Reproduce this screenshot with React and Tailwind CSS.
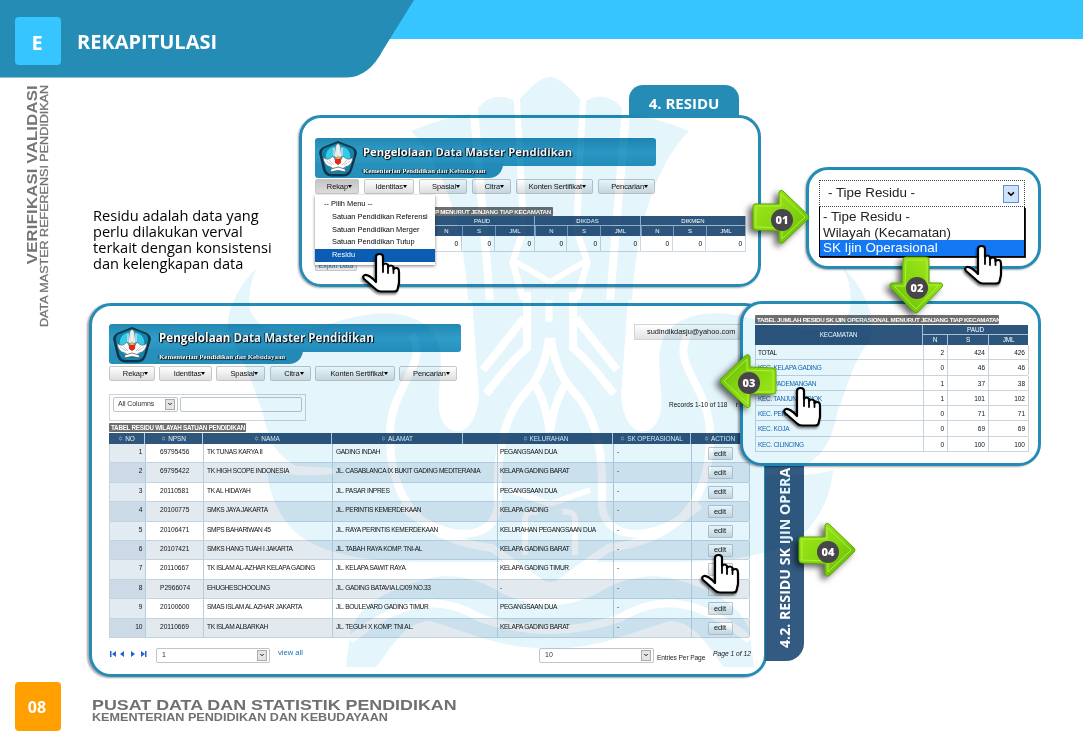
import { ChevronDown, ChevronsUpDown } from "lucide-react";

const schools = [
  ["1", "69795456", "TK TUNAS KARYA II", "GADING INDAH", "PEGANGSAAN DUA"],
  ["2", "69795422", "TK HIGH SCOPE INDONESIA", "JL. CASABLANCA IX BUKIT GADING MEDITERANIA", "KELAPA GADING BARAT"],
  ["3", "20110581", "TK AL HIDAYAH", "JL. PASAR INPRES", "PEGANGSAAN DUA"],
  ["4", "20100775", "SMKS JAYA JAKARTA", "JL. PERINTIS KEMERDEKAAN", "KELAPA GADING"],
  ["5", "20106471", "SMPS BAHARIWAN 45", "JL. RAYA PERINTIS KEMERDEKAAN", "KELURAHAN PEGANGSAAN DUA"],
  ["6", "20107421", "SMKS HANG TUAH I JAKARTA", "JL. TABAH RAYA KOMP. TNI-AL", "KELAPA GADING BARAT"],
  ["7", "20110667", "TK ISLAM AL-AZHAR KELAPA GADING", "JL. KELAPA SAWIT RAYA", "KELAPA GADING TIMUR"],
  ["8", "P2966074", "EHUGHESCHOOLING", "JL. GADING BATAVIA LC/09 NO.33", "-"],
  ["9", "20100600", "SMAS ISLAM AL AZHAR JAKARTA", "JL. BOULEVARD GADING TIMUR", "PEGANGSAAN DUA"],
  ["10", "20110669", "TK ISLAM ALBARKAH", "JL. TEGUH X KOMP. TNI AL.", "KELAPA GADING BARAT"],
];

const districts = [
  ["TOTAL", 2, 424, 426],
  ["KEC. KELAPA GADING", 0, 46, 46],
  ["KEC. PADEMANGAN", 1, 37, 38],
  ["KEC. TANJUNG PRIOK", 1, 101, 102],
  ["KEC. PENJARINGAN", 0, 71, 71],
  ["KEC. KOJA", 0, 69, 69],
  ["KEC. CILINCING", 0, 100, 100],
];

const menuSmall = [
  ["Rekap", "w-[44px] from-[#c4c4c4] to-[#dcdcdc]"],
  ["Identitas", "w-[50px] from-white to-[#dedede]"],
  ["Spasial", "w-[48px] from-white to-[#dedede]"],
  ["Citra", "w-[39px] from-white to-[#dedede]"],
  ["Konten Sertifikat", "w-[77px] from-white to-[#dedede]"],
  ["Pencarian", "w-[57px] from-white to-[#dedede]"],
];

const menuLarge = [
  ["Rekap", "w-[46px] from-white to-[#dedede]"],
  ["Identitas", "w-[53px] from-white to-[#dedede]"],
  ["Spasial", "w-[49px] from-white to-[#dedede]"],
  ["Citra", "w-[41px] from-white to-[#dedede]"],
  ["Konten Sertifikat", "w-[80px] from-white to-[#dedede]"],
  ["Pencarian", "w-[58px] from-white to-[#dedede]"],
];

function Emblem() {
  return (
    <svg viewBox="0 0 40 38" className="h-[38px] w-[40px]">
      <path d="M20 1 L35 7 Q40 10 38.500 15 L34 30 Q32 36 26 36.500 L13 36.500 Q7 36 5 30 L1.500 15 Q0 10 5 7 Z" fill="#10354a" />
      <path d="M20 3 L34 8.500 Q37 11 36 15 L32 29 Q30 34 25 34 L14 34 Q9 34 7.500 29 L4 15 Q3 11 6 8.500 Z" fill="#1285ae" />
      <path d="M8 20 Q6 7 20 6 Q34 7 32 20 L27 29 H13 Z" fill="#35cbe6" />
      <path d="M18 5 L20 3.500 L22 5 L24 17 H16 Z" fill="#eef3f2" stroke="#546" strokeWidth="0.5" />
      <path d="M16 8 V16 M18.500 7 V17 M21.500 7 V17 M24 8 V16" stroke="#dfe8e8" strokeWidth="1.200" />
      <path d="M5 17 Q10 22 15 16 L20 25 L25 16 Q30 22 35 17 Q34 26 27 27 L23 30 H17 L13 27 Q6 26 5 17Z" fill="#fff" stroke="#46525a" strokeWidth="0.600" />
      <path d="M8 21 L14 25 M32 21 L26 25 M11 20 L16 25 M29 20 L24 25" stroke="#87949a" strokeWidth="0.500" />
      <circle cx="20" cy="21" r="3.200" fill="#e3281c" />
      <path d="M20 15 L22 19 H18Z" fill="#f2b233" />
      <path d="M13 29 L20 27 L27 29 L28 32 L20 30.500 L12 32Z" fill="#fff" stroke="#333" strokeWidth="0.600" />
    </svg>
  );
}

function Banner({ wide }) {
  return (
    <div className="relative h-[41px]">
      <div className={`h-[28px] rounded-[3px] bg-linear-to-b from-[#2388b1] via-[#2f9dc7] to-[#2792bd] ${wide ? "w-[352px]" : "w-[341px]"}`} />
      <div className={`-mt-[3px] h-[15px] rounded-bl-[3px] rounded-br-[14px] bg-[#2790ba] ${wide ? "w-[194px]" : "w-[188px]"}`} />
      <div className="absolute top-0 left-[3px] flex">
        <div className="mt-[2px]">
          <Emblem />
        </div>
        <div className={`whitespace-nowrap font-bold text-white ${wide ? "ml-[7px]" : "ml-[5px]"}`}>
          <div className={`mt-[5px] font-['Open_Sans',sans-serif] leading-[17px] [text-shadow:1px_1px_1px_#000,-1px_0_1px_#123] ${wide ? "text-[11.5px] tracking-[0.08px]" : "text-[11.2px] tracking-[0.08px]"}`}>
            Pengelolaan Data Master Pendidikan
          </div>
          <div className={`mt-[6px] font-['Liberation_Serif',serif] leading-[9px] [text-shadow:1px_1px_1px_#000,-1px_0_1px_#012] ${wide ? "text-[6.9px]" : "text-[6.7px]"}`}>
            Kementerian Pendidikan dan Kebudayaan
          </div>
        </div>
      </div>
    </div>
  );
}

function MenuBar({ items, gap }) {
  return (
    <div className={`flex ${gap}`}>
      {items.map(([label, style]) => (
        <button
          key={label}
          className={`flex h-[15px] shrink-0 items-center justify-end whitespace-nowrap rounded-[2px] border border-[#c6c6c6] bg-linear-to-b pr-[6px] text-[7.5px] tracking-[-0.1px] text-[#111] ${style}`}
        >
          {label}
          <span className="border-x-[2px] border-t-[3px] border-x-transparent border-t-black" />
        </button>
      ))}
    </div>
  );
}

function TableLabel({ children, className }) {
  return (
    <div className={`flex h-[9px] items-center whitespace-nowrap rounded-[1px] bg-[#6f6f6f] font-bold text-white ${className}`}>
      {children}
    </div>
  );
}

function Arrow({ label, className, rotate, dot }) {
  return (
    <div className={`absolute z-30 h-[58px] w-[60px] ${className}`}>
      <div className="drop-shadow-[-4px_3px_3px_rgba(0,0,0,0.6)]">
        <svg viewBox="0 0 60 58" className={`h-[58px] w-[60px] overflow-visible ${rotate}`}>
          <defs>
            <linearGradient id={`leaf${label}`} x1="0" y1="0" x2="1" y2="1">
              <stop offset="0" stopColor="#a4ea18" />
              <stop offset="0.500" stopColor="#86d810" />
              <stop offset="1" stopColor="#62b505" />
            </linearGradient>
          </defs>
          <path
            d="M4 16 H28 V4 Q29 1 32 3 L57 27 Q59 29 57 31 L33 54 Q29 57 28 53 V43 L5 42 Q2 42 2 39 V19 Q2 16 4 16Z"
            fill={`url(#leaf${label})`}
            stroke="#58a808"
          />
          <path d="M5 18 H30 V6 L54 29 L31 51 V40 L5 39Z" fill="none" stroke="#b4ee3e" strokeWidth="1" />
        </svg>
      </div>
      <span className={`absolute flex size-[22px] items-center justify-center rounded-full bg-[#48454b] font-['Open_Sans',sans-serif] text-[11px] font-extrabold text-white ${dot}`}>
        {label}
      </span>
    </div>
  );
}

function Hand({ className }) {
  return (
    <svg viewBox="0 0 40 42" className={`absolute z-30 h-[42px] w-[40px] overflow-visible drop-shadow-[-1px_2px_1px_rgba(0,0,0,0.5)] ${className}`}>
      <path
        d="M15 30 V5 Q15 2 18.500 2 Q22 2 22 5 V13 Q24.500 10 27 13 V15 Q30 12 32.500 15 V17 Q38 14 38 20 V31 L36.500 37.500 Q36 39.500 33 39.500 H20 Q17 39.500 15 37.500 L3 27 Q1 24 4 23 Q8 22.500 15 30Z"
        fill="#fff"
        stroke="#000"
        strokeWidth="2.200"
        strokeLinejoin="round"
      />
      <path d="M22 12V20 M27 14V21 M32.500 16V21" stroke="#000" strokeWidth="1.800" strokeLinecap="round" />
    </svg>
  );
}

function WatermarkHalf() {
  return (
    <>
      <g fill="#e4f5fc">
        <path d="M550 77 C540 77 528 90 520 99 L527 230 L516 262 L527 300 H550Z" />
        <path d="M514 101 Q500 92 484 102 L478 108 L494 300 H520 L509 262 L520 230Z" />
        <path d="M411 131 Q442 118 470 114 L486 300 H468 C464 230 445 165 411 131Z" />
        <path d="M257 268 C235 288 221 322 231 342 C248 362 253 390 262 410 C268 440 276 455 296 466 L333 468 L335 474 C310 476 286 476 267 470 C268 490 278 515 293 530 C320 556 370 562 430 562 L510 562 Q522 580 550 582 V300 H472 L479 395 C477 425 462 438 448 428 C430 412 444 380 440 350 C436 320 400 305 350 318 C300 332 262 340 250 310 Q247 286 257 268Z" />
        <path d="M350 634 C356 605 390 588 430 578 C455 573 480 580 500 592 Q522 604 550 606 V648 C500 650 465 630 430 621 C404 622 393 646 376 667 H346 Z" />
      </g>
      <g fill="none" stroke="#fff" strokeWidth="8">
        <path d="M527 292 V348 Q512 360 486 394 M524 318 L483 370" />
        <path d="M549 338 Q545 370 528 390 C505 412 496 450 498 500 C500 540 450 548 400 505" />
        <path d="M535 385 Q545 400 550 432" />
        <path d="M412 334 C430 366 390 385 390 435 C390 505 425 540 492 548 L550 590" />
        <path d="M350 640 C410 590 450 600 480 618 Q515 630 550 630" />
        <path d="M510 490 L550 504 M525 555 V520 Q525 510 538 512" strokeWidth="6" />
        <path d="M516 262 L550 282" strokeWidth="6" />
      </g>
    </>
  );
}

function Watermark() {
  return (
    <svg viewBox="0 0 1083 750" className="pointer-events-none absolute inset-0 z-20 h-[750px] w-[1083px] mix-blend-multiply">
      <WatermarkHalf />
      <g transform="translate(1100 0) scale(-1 1)">
        <WatermarkHalf />
      </g>
      <path d="M549 300 V322" stroke="#fff" strokeWidth="7" />
    </svg>
  );
}

function ResiduPanel() {
  const sub = ["N", "S", "JML"];
  return (
    <section className="ml-px flex w-[462px] shrink-0 flex-col pt-[7px]">
      <div className="mr-[22px] flex h-[33px] w-[110px] items-center justify-center self-end rounded-t-[14px] bg-[#258cb5] pt-[3px] font-['Open_Sans',sans-serif] text-[15px] font-bold text-white">
        4. RESIDU
      </div>
      <div className="-mt-[3px] h-[172px] rounded-[22px] border-[3px] border-[#258cb5] pt-[20px] pl-[13px] shadow-[-1px_1px_2px_rgba(0,0,0,0.35)]">
        <Banner />
        <div className="flex flex-col">
          <MenuBar items={menuSmall} gap="gap-[5px]" />
          <div className="mt-[13px] h-[9px] w-[238px]">
            <TableLabel className="w-full justify-end pr-[2px] text-[6.2px] tracking-[-0.25px]">IP MENURUT JENJANG TIAP KECAMATAN</TableLabel>
          </div>
          <div className="grid w-[431px] grid-cols-[115px_105px_106px_105px] bg-[#2e567c] text-center text-[6px] text-white">
            <div className="border-r border-[#9ab4cc]" />
            {["PAUD", "DIKDAS", "DIKMEN"].map((g) => (
              <div key={g} className="h-[20px] border-r border-[#9ab4cc]">
                <div className="h-[10px] border-b border-[#9ab4cc] leading-[10px]">{g}</div>
                <div className="grid grid-cols-[32px_33px_1fr] leading-[10px]">
                  {sub.map((s) => (
                    <span key={s} className="h-[10px] border-l border-[#7d9bb8]">{s}</span>
                  ))}
                </div>
              </div>
            ))}
          </div>
          <div className="grid h-[16px] w-[431px] grid-cols-[115px_32px_33px_40px_32px_34px_40px_32px_33px_40px] border-b border-[#c9d8e2] text-right text-[6.5px] leading-[15px] text-black">
            <span className="border-l border-[#c9d8e2] pr-1" />
            {[0, 1, 2, 3, 4, 5, 6, 7, 8].map((i) => (
              <span key={i} className="border-r border-[#c9d8e2] pr-[3px]">0</span>
            ))}
          </div>
          <div className="mt-[8px] h-[11px] w-[42px] rounded-[1px] border border-[#c6c6c6] bg-[#e8e8e8] text-center text-[6.5px] leading-[9px] text-[#1d75b3]">Export Data</div>
        </div>
      </div>
    </section>
  );
}

function RekapMenu() {
  return (
    <div className="absolute top-[195px] left-[315px] z-30 w-[120px] bg-white pt-[3px] pb-[3px] text-[7.4px] leading-[12.8px] whitespace-nowrap text-black shadow-[0_1px_3px_rgba(0,0,0,0.5)]">
      <div className="pl-[9px]">-- Pilih Menu --</div>
      <div className="pl-[17px]">Satuan Pendidikan Referensi</div>
      <div className="pl-[17px]">Satuan Pendidikan Merger</div>
      <div className="pl-[17px]">Satuan Pendidikan Tutup</div>
      <div className="bg-[#0a5db3] pl-[17px] text-white">Residu</div>
    </div>
  );
}

function TypePanel() {
  return (
    <section className="mt-[89px] ml-[45px] h-[102px] w-[235px] shrink-0 rounded-[22px] border-[3px] border-[#258cb5] bg-white pt-[10px] pl-[10px] shadow-[-1px_1px_2px_rgba(0,0,0,0.35)]">
      <div className="flex h-[27px] w-[206px] items-center justify-between border border-dotted border-[#444] pr-[5px] pl-[8px] text-[13.4px] text-[#222]">
        - Tipe Residu -
        <span className="flex h-[18px] w-[16px] items-center justify-center border border-[#5b93cf] bg-[#cfe2fa]">
          <ChevronDown size={10} strokeWidth={4} className="text-black" />
        </span>
      </div>
      <div className="w-[206px] border border-t-0 border-black text-[13.4px] leading-[15.7px] text-[#222] shadow-[1px_1px_0_#222]">
        <div className="pt-[2px] pl-[3px]">- Tipe Residu -</div>
        <div className="pl-[3px]">Wilayah (Kecamatan)</div>
        <div className="bg-[#1478f5] pl-[3px] text-white">SK Ijin Operasional</div>
      </div>
    </section>
  );
}

function DistrictPanel() {
  return (
    <section className="relative z-10 -ml-[64px] h-[165px] w-[301px] shrink-0 rounded-[22px] border-[3px] border-[#258cb5] bg-white pt-[11px] pl-[12px] shadow-[-2px_1px_2px_rgba(0,0,0,0.35)]">
      <TableLabel className="w-[244px] pl-[2px] text-[6.2px] tracking-[-0.28px]">TABEL JUMLAH RESIDU SK IJIN OPERASIONAL MENURUT JENJANG TIAP KECAMATAN</TableLabel>
      <div className="mt-[1px] grid h-[20px] w-[273px] grid-cols-[168px_105px] bg-[#2e567c] text-center text-[6.5px] tracking-[-0.2px] text-white">
        <div className="border-r border-[#a9bfd3] leading-[20px]">KECAMATAN</div>
        <div className="leading-[10px]">
          <div className="h-[10px] border-b border-[#a9bfd3]">PAUD</div>
          <div className="grid grid-cols-[24px_41px_40px]">
            <span>N</span>
            <span className="border-l border-[#a9bfd3]">S</span>
            <span className="border-l border-[#a9bfd3]">JML</span>
          </div>
        </div>
      </div>
      {districts.map(([name, n, s, total], i) => (
        <div key={name} className="grid h-[15.3px] w-[273px] grid-cols-[168px_24px_41px_40px] border-b border-l border-[#c9d5de] text-right text-[6.5px] leading-[15px] text-[#111]">
          <span className={`border-r border-[#c9d5de] pl-[2px] text-left tracking-[-0.3px] ${i ? "text-[#1268b3]" : "text-[#111]"}`}>{name}</span>
          <span className="border-r border-[#c9d5de] pr-[3px]">{n}</span>
          <span className="border-r border-[#c9d5de] pr-[3px]">{s}</span>
          <span className="border-r border-[#c9d5de] pr-[3px]">{total}</span>
        </div>
      ))}
    </section>
  );
}

function SelectBox({ value, className }) {
  return (
    <div className={`flex h-[15px] items-center justify-between rounded-[2px] border border-[#bdc6cc] bg-white pr-[2px] text-[7px] text-[#333] ${className}`}>
      {value}
      <span className="flex h-[11px] w-[10px] items-center justify-center border border-[#aaa] bg-[#e4e4e4]">
        <ChevronDown size={6} strokeWidth={4} className="text-[#222]" />
      </span>
    </div>
  );
}

function SchoolTable() {
  const cols = "grid-cols-[36px_58px_129px_165px_116px_78px_58px]";
  const cell = "border-r border-[#b9ccda]";
  return (
    <div className="w-[640px] whitespace-nowrap">
      <div className={`grid ${cols} h-[11px] bg-[#2e567c] text-[6.5px] leading-[11px] tracking-[-0.1px] text-[#e6eef5]`}>
        {["NO", "NPSN", "NAMA", "ALAMAT", "KELURAHAN", "SK OPERASIONAL", "ACTION"].map((h) => (
          <div key={h} className={`flex items-center justify-center gap-[2px] border-[#b9ccda] ${h === "ALAMAT" ? "mr-[34px] border-r" : h === "KELURAHAN" ? "-ml-[34px] border-r pl-[16px]" : "border-r"}`}>
            <ChevronsUpDown size={5} strokeWidth={3} />
            {h}
          </div>
        ))}
      </div>
      {schools.map(([no, npsn, name, address, village], i) => (
        <div
          key={no}
          className={`grid ${cols} h-[19.4px] border-b border-l border-[#c3d3df] text-[6.6px] leading-[15px] tracking-[-0.34px] text-[#111] ${i % 2 ? "bg-[#e2eaf0]" : "bg-white"}`}
        >
          <span className={`${cell} pr-[3px] text-right ${i % 2 ? "bg-[#ccd9e6]" : "bg-[#e2eaf2]"}`}>{no}</span>
          <span className={`${cell} pl-[14px] tracking-normal`}>{npsn}</span>
          <span className={`${cell} pl-[3px]`}>{name}</span>
          <span className={`${cell} pl-[3px]`}>{address}</span>
          <span className={`${cell} pl-[2px]`}>{village}</span>
          <span className={`${cell} pl-[3px]`}>-</span>
          <span className="flex justify-center border-r border-[#b9ccda] pt-[3px] pr-[1px] tracking-normal">
            <button className="h-[13px] w-[25px] rounded-[1px] border border-[#bcc5cb] bg-linear-to-b from-white to-[#d9dee1] text-[7.5px] leading-[10px]">edit</button>
          </span>
        </div>
      ))}
    </div>
  );
}

function SchoolPanel() {
  return (
    <section className="mt-[2px] h-[374px] w-[678px] shrink-0 rounded-[22px] border-[3px] border-[#258cb5] bg-white pt-[18px] pl-[17px] shadow-[-2px_1px_2px_rgba(0,0,0,0.35)]">
      <div className="flex justify-between">
        <Banner wide />
        <div className="h-[16px] w-[130px] border border-[#d5d5d5] bg-linear-to-b from-white to-[#e2e2e2] pl-[12px] text-[7.4px] leading-[14px] whitespace-nowrap text-[#111]">
          sudindikdasju@yahoo.com
        </div>
      </div>
      <MenuBar items={menuLarge} gap="mt-[1px] gap-[4.2px]" />
      <div className="mt-[13px] flex items-start justify-between">
        <div className="flex h-[27px] w-[197px] gap-[2px] border border-[#ccd5db] pt-[2px] pl-[3px]">
          <SelectBox value="All Columns" className="w-[65px] pb-[1px] pl-[4px] tracking-[-0.1px]" />
          <div className="h-[15px] w-[122px] rounded-[2px] border border-[#bdc6cc]" />
        </div>
        <div className="mt-[5px] mr-[13px] flex w-[82px] justify-between pr-[13px] text-[6.5px] leading-[11px] whitespace-nowrap text-[#111]">
          <span>Records 1-10 of 118</span>
          <span>r</span>
        </div>
      </div>
      <TableLabel className="mt-[2px] w-[137px] pl-[2px] text-[6.3px] tracking-[-0.27px]">TABEL RESIDU WILAYAH SATUAN PENDIDIKAN</TableLabel>
      <div className="mt-[1px]">
        <SchoolTable />
      </div>
      <div className="mt-[10px] flex w-[641px] items-start text-[7px] whitespace-nowrap text-[#222]">
        <svg viewBox="0 0 38 8" className="mt-[2px] h-[8px] w-[38px]" fill="#2462d2">
          <path d="M1 1h1.500v6H1z M7 1v6L3 4z M15 1v6L11 4z M22 1v6L26 4z M32 1v6L36 4z M36 1h1.500v6H36z" />
        </svg>
        <SelectBox value="1" className="ml-[9px] w-[114px] pl-[5px]" />
        <span className="ml-[8px] text-[7.6px] leading-[10px] text-[#1673bb]">view all</span>
        <SelectBox value="10" className="ml-auto w-[115px] pl-[5px]" />
        <span className="ml-[3px] w-[56px] pt-[5px] text-[6.6px] leading-[9px] tracking-[-0.1px]">Entries Per Page</span>
        <span className="w-[37px] text-[6.7px] leading-[11px] italic">Page 1 of 12</span>
      </div>
    </section>
  );
}

export default function App() {
  return (
    <div className="relative flex h-[750px] w-[1083px] flex-col overflow-hidden bg-white font-['Liberation_Sans',Arial,sans-serif]">
      <header className="relative h-[78px] shrink-0">
        <div className="h-[39px] bg-[#36c5ff]" />
        <svg viewBox="0 0 420 78" className="absolute top-0 left-0 h-[78px] w-[420px]">
          <path d="M0 0 H414 L383 50 Q369 77 347 77.500 H0Z" fill="#258cb5" />
        </svg>
        <div className="absolute top-[17px] left-[15px] flex items-center font-['Open_Sans',sans-serif] font-bold text-white">
          <div className="flex h-[48px] w-[46px] items-center justify-center rounded-[4px] bg-[#36c5ff] pt-[3px] pr-[2px] text-[20px]">E</div>
          <h1 className="ml-[16px] pt-[1px] text-[20px] leading-[26px]">REKAPITULASI</h1>
        </div>
      </header>

      <div className="flex h-[600px] shrink-0">
        <aside className="flex w-[89px] shrink-0 items-start pt-[7px] pl-[25px] leading-none whitespace-nowrap text-[#757575]">
          <div className="origin-top scale-y-[1.19]">
            <div className="w-[14px] rotate-180 text-[14px] leading-[14px] font-bold tracking-[0.2px] [writing-mode:vertical-rl]">VERIFIKASI VALIDASI</div>
          </div>
          <div className="origin-top scale-y-[1.14]">
            <div className="w-[11px] rotate-180 text-[11px] leading-[11px] [writing-mode:vertical-rl] [-webkit-text-stroke:0.3px_#757575]">DATA MASTER REFERENSI PENDIDIKAN</div>
          </div>
        </aside>
        <main className="w-[994px] shrink-0">
          <div className="flex h-[223px]">
            <p className="mt-[129px] ml-[4px] w-[205px] shrink-0 font-['Open_Sans',sans-serif] text-[14.6px] leading-[16px] whitespace-nowrap text-black">
              Residu adalah data yang
              <br />
              perlu dilakukan verval
              <br />
              terkait dengan konsistensi
              <br />
              dan kelengkapan data
            </p>
            <ResiduPanel />
            <TypePanel />
          </div>
          <div className="flex">
            <SchoolPanel />
            <div className="-ml-[2px] mt-[140px] flex h-[220px] w-[39px] shrink-0 justify-center rounded-br-[18px] bg-[#335a80]">
              <span className="rotate-180 pt-[13px] font-['Open_Sans',sans-serif] text-[14.2px] leading-[39px] font-bold whitespace-nowrap text-white [writing-mode:vertical-rl]">
                4.2. RESIDU SK IJIN OPERA
              </span>
            </div>
            <DistrictPanel />
          </div>
        </main>
      </div>

      <footer className="flex pt-[4px] pl-[15px]">
        <div className="flex h-[49px] w-[46px] items-center justify-center rounded-[4px] bg-[#ffa000] pr-[2px] font-['Open_Sans',sans-serif] text-[16px] font-bold text-white">08</div>
        <div className="ml-[31px] pt-[15px] whitespace-nowrap text-[#707070]">
          <div className="origin-left scale-x-[1.19] text-[15px] leading-[15px] font-bold">PUSAT DATA DAN STATISTIK PENDIDIKAN</div>
          <div className="origin-left scale-x-[1.2] text-[10.5px] leading-[11px] font-bold">KEMENTERIAN PENDIDIKAN DAN KEBUDAYAAN</div>
        </div>
      </footer>

      <Watermark />
      <RekapMenu />
      <Arrow label="01" className="top-[188px] left-[751px]" rotate="rotate-0" dot="top-[21px] left-[20px]" />
      <Arrow label="02" className="top-[256px] left-[886px]" rotate="rotate-90" dot="top-[21px] left-[20px]" />
      <Arrow label="03" className="top-[352px] left-[718px]" rotate="rotate-180" dot="top-[20px] left-[20px]" />
      <Arrow label="04" className="top-[521px] left-[797px]" rotate="rotate-0" dot="top-[20px] left-[20px]" />
      <Hand className="top-[252px] left-[361px]" />
      <Hand className="top-[244px] left-[963px]" />
      <Hand className="top-[386px] left-[782px]" />
      <Hand className="top-[553px] left-[700px]" />
    </div>
  );
}
